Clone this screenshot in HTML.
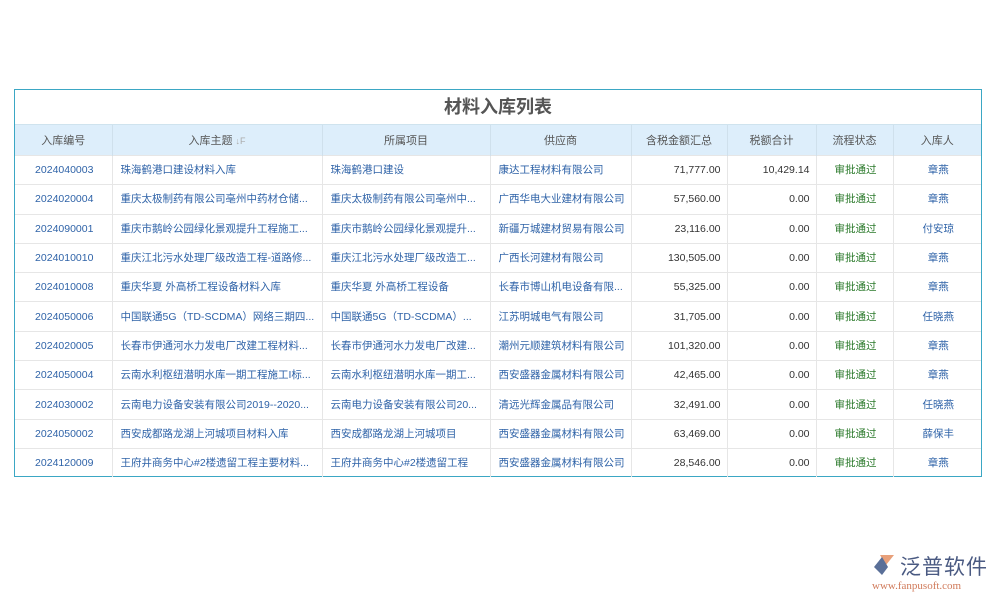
<!DOCTYPE html>
<html><head><meta charset="utf-8"><style>
body{margin:0;width:1000px;height:600px;background:#fff;font-family:"Liberation Sans","Noto Sans CJK SC",sans-serif;position:relative;overflow:hidden}
.box{position:absolute;left:14px;top:89px;width:966px;height:386px;border:1px solid #3ba7c4}
.title{height:34px;line-height:34px;text-align:center;font-size:18px;font-weight:bold;color:#555;border-bottom:1px solid #cfe3ee}
table{border-collapse:collapse;width:966px;table-layout:fixed;font-size:10.5px}
th{background:#ddeefb;color:#555;font-weight:normal;height:30px;border-right:1px solid #cfe0ec;padding:0;font-size:11px}
td{height:28.3px;line-height:14px;vertical-align:middle;border-top:1px solid #e6e6e6;border-right:1px solid #e6e6e6;color:#2f63a8;padding:0 6px 0 8px;white-space:nowrap;overflow:hidden;text-overflow:ellipsis}
th:last-child,td:last-child{border-right:none}
.c{text-align:center}.r{text-align:right;color:#333}.g{color:#2b7a2b;text-align:center}
</style></head><body>
<div class="box">
<div class="title">材料入库列表</div>
<table>
<colgroup><col style="width:97px"><col style="width:210px"><col style="width:168px"><col style="width:141px"><col style="width:96px"><col style="width:89px"><col style="width:77px"><col style="width:88px"></colgroup>
<tr><th>入库编号</th><th>入库主题 <span style="color:#aaa;font-size:9px">↓F</span></th><th>所属项目</th><th>供应商</th><th>含税金额汇总</th><th>税额合计</th><th>流程状态</th><th>入库人</th></tr>
<tr><td class="c">2024040003</td><td>珠海鹤港口建设材料入库</td><td>珠海鹤港口建设</td><td>康达工程材料有限公司</td><td class="r">71,777.00</td><td class="r">10,429.14</td><td class="g">审批通过</td><td class="c">章燕</td></tr>
<tr><td class="c">2024020004</td><td>重庆太极制药有限公司亳州中药材仓储...</td><td>重庆太极制药有限公司亳州中...</td><td>广西华电大业建材有限公司</td><td class="r">57,560.00</td><td class="r">0.00</td><td class="g">审批通过</td><td class="c">章燕</td></tr>
<tr><td class="c">2024090001</td><td>重庆市鹅岭公园绿化景观提升工程施工...</td><td>重庆市鹅岭公园绿化景观提升...</td><td>新疆万城建材贸易有限公司</td><td class="r">23,116.00</td><td class="r">0.00</td><td class="g">审批通过</td><td class="c">付安琼</td></tr>
<tr><td class="c">2024010010</td><td>重庆江北污水处理厂级改造工程-道路修...</td><td>重庆江北污水处理厂级改造工...</td><td>广西长河建材有限公司</td><td class="r">130,505.00</td><td class="r">0.00</td><td class="g">审批通过</td><td class="c">章燕</td></tr>
<tr><td class="c">2024010008</td><td>重庆华夏 外高桥工程设备材料入库</td><td>重庆华夏 外高桥工程设备</td><td>长春市博山机电设备有限...</td><td class="r">55,325.00</td><td class="r">0.00</td><td class="g">审批通过</td><td class="c">章燕</td></tr>
<tr><td class="c">2024050006</td><td>中国联通5G（TD-SCDMA）网络三期四...</td><td>中国联通5G（TD-SCDMA）...</td><td>江苏明城电气有限公司</td><td class="r">31,705.00</td><td class="r">0.00</td><td class="g">审批通过</td><td class="c">任晓燕</td></tr>
<tr><td class="c">2024020005</td><td>长春市伊通河水力发电厂改建工程材料...</td><td>长春市伊通河水力发电厂改建...</td><td>潮州元顺建筑材料有限公司</td><td class="r">101,320.00</td><td class="r">0.00</td><td class="g">审批通过</td><td class="c">章燕</td></tr>
<tr><td class="c">2024050004</td><td>云南水利枢纽潜明水库一期工程施工I标...</td><td>云南水利枢纽潜明水库一期工...</td><td>西安盛器金属材料有限公司</td><td class="r">42,465.00</td><td class="r">0.00</td><td class="g">审批通过</td><td class="c">章燕</td></tr>
<tr><td class="c">2024030002</td><td>云南电力设备安装有限公司2019--2020...</td><td>云南电力设备安装有限公司20...</td><td>清远光辉金属品有限公司</td><td class="r">32,491.00</td><td class="r">0.00</td><td class="g">审批通过</td><td class="c">任晓燕</td></tr>
<tr><td class="c">2024050002</td><td>西安成都路龙湖上河城项目材料入库</td><td>西安成都路龙湖上河城项目</td><td>西安盛器金属材料有限公司</td><td class="r">63,469.00</td><td class="r">0.00</td><td class="g">审批通过</td><td class="c">薛保丰</td></tr>
<tr><td class="c">2024120009</td><td>王府井商务中心#2楼遗留工程主要材料...</td><td>王府井商务中心#2楼遗留工程</td><td>西安盛器金属材料有限公司</td><td class="r">28,546.00</td><td class="r">0.00</td><td class="g">审批通过</td><td class="c">章燕</td></tr>
</table>
</div>
<div style="position:absolute;left:872px;top:553px;width:26px;height:24px">
<svg width="26" height="24" viewBox="0 0 26 24"><path d="M8 2 L22 2 L14 12 Z" fill="#e8a07a"/><path d="M2 14 L10 4 L16 14 L10 22 Z" fill="#5a6f98"/></svg></div>
<div style="position:absolute;left:900px;top:551px;font-size:21px;color:#4a5a82;letter-spacing:1px">泛普软件</div>
<div style="position:absolute;left:872px;top:580px;font-size:11px;color:#d07a5a;font-family:'Liberation Serif',serif">www.fanpusoft.com</div>
</body></html>
